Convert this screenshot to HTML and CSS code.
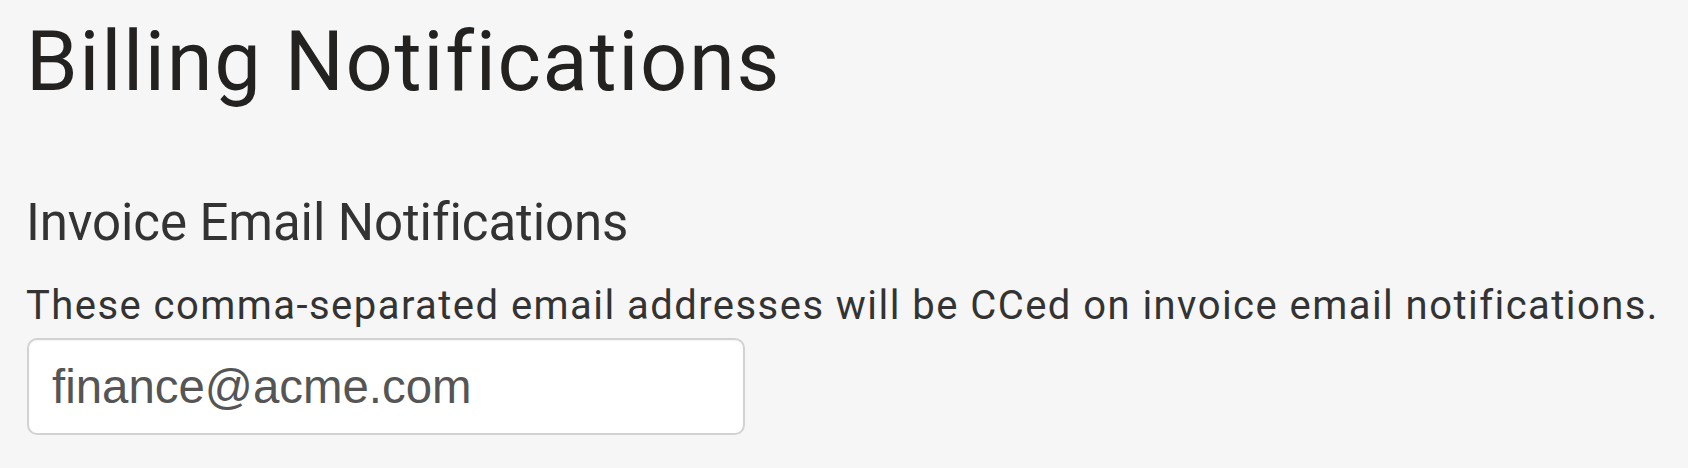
FILE: index.html
```html
<!DOCTYPE html>
<html lang="en">
<head>
<meta charset="utf-8">
<title>Billing Notifications</title>
<link rel="stylesheet" href="styles.css">
</head>
<body>
<main class="page">
  <h1 class="page-title">Billing Notifications</h1>
  <section class="section">
    <h2 class="section-title">Invoice Email Notifications</h2>
    <p class="section-desc">These comma-separated email addresses will be CCed on invoice email notifications.</p>
    <input class="email-input" type="text" value="finance@acme.com" aria-label="Invoice CC email addresses">
  </section>
</main>
</body>
</html>
```

FILE: styles.css
```css
html, body {
  margin: 0;
  padding: 0;
  background: #f6f6f6;
}

.page {
  padding: 12px 26px 0 26px;
  font-family: Roboto, "Liberation Sans", sans-serif;
}

.page-title {
  margin: 0;
  font-size: 83px;
  line-height: 100px;
  font-weight: 400;
  letter-spacing: 1.65px;
  color: #232220;
}

.section {
  display: flex;
  flex-direction: column;
  align-items: flex-start;
  margin-top: 81px;
}

.section-title {
  margin: 0;
  font-size: 51px;
  line-height: 60px;
  font-weight: 400;
  letter-spacing: -0.1px;
  color: #333;
}

.section-desc {
  margin: 29px 0 0 0;
  font-size: 40px;
  line-height: 48px;
  letter-spacing: 1.45px;
  color: #333;
}

.email-input {
  margin-top: 8px;
  margin-left: 1px;
  box-sizing: border-box;
  width: 718px;
  height: 97px;
  padding: 0 23px;
  border: 2px solid #d2d2d2;
  border-radius: 10px;
  background: #fff;
  box-shadow: inset 0 1px 2px rgba(0, 0, 0, 0.05);
  font-family: "Liberation Sans", Arial, sans-serif;
  font-size: 47.4px;
  color: #555;
  outline: none;
}
```
